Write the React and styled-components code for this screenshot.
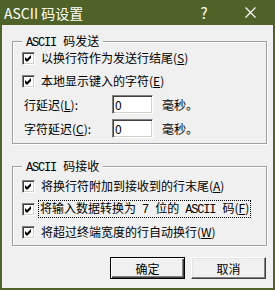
import styled, { createGlobalStyle } from 'styled-components';

const GlobalStyle = createGlobalStyle`
  html, body {
    margin: 0;
    padding: 0;
    background: #4f6228;
  }
  body {
    font-family: "Noto Sans CJK SC", "Liberation Sans", sans-serif;
    font-size: 12px;
    color: #000;
  }
`;

const Window = styled.div`
  width: 275px;
  height: 290px;
  box-sizing: border-box;
  background: #4f6228;
  padding: 0 2px 2px 2px;
  display: flex;
  flex-direction: column;
`;

const TitleBar = styled.div`
  height: 25px;
  display: flex;
  align-items: center;
  color: #fff;
  font-size: 14px;
  padding-left: 2px;
`;

const Title = styled.span`
  flex: 1;
`;

const TitleButton = styled.div`
  width: 46px;
  height: 25px;
  display: flex;
  align-items: center;
  justify-content: center;
  font-size: 15px;
`;

const Body = styled.div`
  flex: 1;
  background: #f0f0f0;
  padding: 8px 6px 0 10px;
  display: flex;
  flex-direction: column;
`;

const Group = styled.fieldset`
  margin: ${p => p.$gap}px 0 0 0;
  min-width: 0;
  padding: ${p => p.$top}px 0 ${p => p.$bottom}px 9px;
  border: 1px solid #a0a0a0;
  box-shadow: inset 1px 1px #fff, 1px 1px #fff;
  display: flex;
  flex-direction: column;
  gap: 5px;
`;

const Legend = styled.legend`
  padding: 0 4px;
  margin-left: 0;
  line-height: 16px;
  height: 16px;
  background: #f0f0f0;
`;

/* half-width latin text, like the bitmap font of the original */
const Mono = styled.span`
  font-family: "Liberation Mono", "DejaVu Sans Mono", monospace;
  font-size: 12px;
  letter-spacing: -1.2px;
  margin-right: 1.2px;
`;

const CheckRow = styled.div`
  height: 18px;
  display: flex;
  align-items: center;
`;

const Box = styled.span`
  width: 13px;
  height: 13px;
  box-sizing: border-box;
  background: #fff;
  border: 1px solid;
  border-color: #808080 #fff #fff #808080;
  box-shadow: inset 1px 1px #404040, inset -1px -1px #d4d0c8;
  display: flex;
  align-items: center;
  justify-content: center;
  flex-shrink: 0;
`;

const Label = styled.span`
  margin-left: ${p => (p.$focus ? 3 : 5)}px;
  border: 1px dotted ${p => (p.$focus ? '#000' : 'transparent')};
  padding: 0 1px 0 ${p => (p.$focus ? 1 : 0)}px;
  line-height: 14px;
  white-space: nowrap;
`;

const FieldRow = styled.div`
  height: 19px;
  display: flex;
  align-items: center;
`;

const FieldLabel = styled.span`
  width: 88px;
  margin-left: 2px;
  white-space: nowrap;
`;

const Input = styled.input`
  width: 41px;
  height: 19px;
  box-sizing: border-box;
  padding: 0 2px;
  font: inherit;
  font-size: 12px;
  background: #fff;
  border: 1px solid;
  border-color: #808080 #fff #fff #808080;
  box-shadow: inset 1px 1px #404040, inset -1px -1px #d4d0c8;
  outline: none;
`;

const Unit = styled.span`
  margin-left: 9px;
`;

const ButtonRow = styled.div`
  margin-top: 11px;
  display: flex;
  justify-content: flex-end;
  gap: 6px;
  padding-right: 1px;
`;

const Button = styled.button`
  width: 75px;
  height: 22px;
  padding: 0;
  font: inherit;
  font-size: 12px;
  color: #000;
  background: #f0f0f0;
  border: 1px solid;
  border-color: ${p => (p.$default ? '#000' : '#fff #404040 #404040 #fff')};
  box-shadow: ${p =>
    p.$default
      ? 'inset 1px 1px #fff, inset -1px -1px #404040, inset -2px -2px #808080'
      : 'inset -1px -1px #808080, inset 1px 1px #e3e3e3'};
`;

const Check = () => (
  <Box>
    <svg width="7" height="7" viewBox="0 0 7 7">
      <polygon points="0,2 2,4 6,0 6,3 2,7 0,5" fill="#000" />
    </svg>
  </Box>
);

const CheckItem = ({ children, focus }) => (
  <CheckRow>
    <Check />
    <Label $focus={focus}>{children}</Label>
  </CheckRow>
);

const Close = () => (
  <svg width="11" height="11" viewBox="0 0 11 11">
    <path d="M0.5 0.5 L10.5 10.5 M10.5 0.5 L0.5 10.5" stroke="#fff" strokeWidth="1.2" />
  </svg>
);

const App = () => {
  return (
    <Window>
      <GlobalStyle />
      <TitleBar>
        <Title>ASCII 码设置</Title>
        <TitleButton>?</TitleButton>
        <TitleButton>
          <Close />
        </TitleButton>
      </TitleBar>
      <Body>
        <Group $gap={0} $top={0} $bottom={5}>
          <Legend><Mono>ASCII </Mono>码发送</Legend>
          <CheckItem>以换行符作为发送行结尾(<u>S</u>)</CheckItem>
          <CheckItem>本地显示键入的字符(<u>E</u>)</CheckItem>
          <FieldRow>
            <FieldLabel>行延迟(<u>L</u>):</FieldLabel>
            <Input defaultValue="0" />
            <Unit>毫秒。</Unit>
          </FieldRow>
          <FieldRow>
            <FieldLabel>字符延迟(<u>C</u>):</FieldLabel>
            <Input defaultValue="0" />
            <Unit>毫秒。</Unit>
          </FieldRow>
        </Group>
        <Group $gap={14} $top={3} $bottom={4}>
          <Legend><Mono>ASCII </Mono>码接收</Legend>
          <CheckItem>将换行符附加到接收到的行末尾(<u>A</u>)</CheckItem>
          <CheckItem focus>将输入数据转换为<Mono> 7 </Mono>位的<Mono> ASCII </Mono>码(<u>F</u>)</CheckItem>
          <CheckItem>将超过终端宽度的行自动换行(<u>W</u>)</CheckItem>
        </Group>
        <ButtonRow>
          <Button $default>确定</Button>
          <Button>取消</Button>
        </ButtonRow>
      </Body>
    </Window>
  );
};

export default App;
